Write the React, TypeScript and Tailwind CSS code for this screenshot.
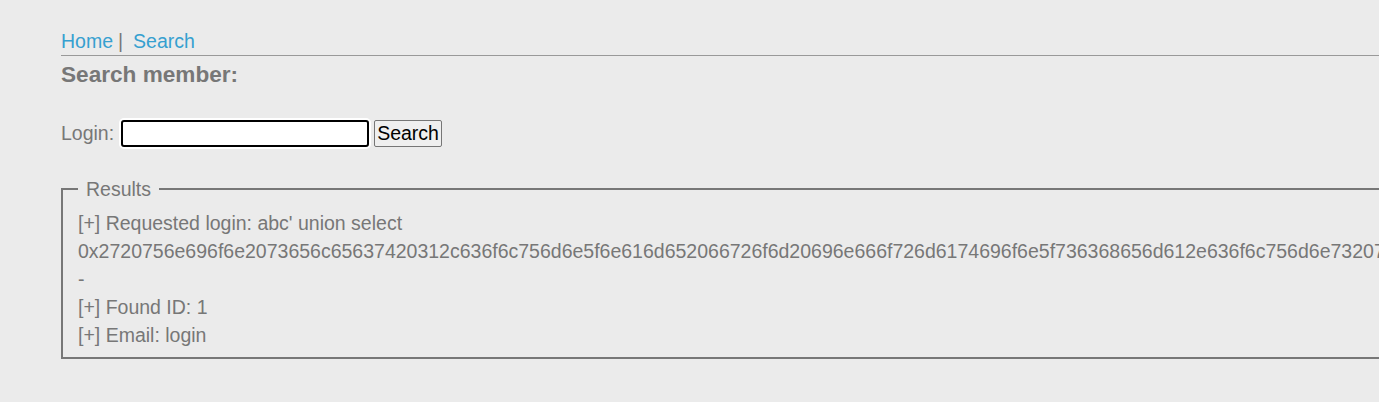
export default function App() {
  const hex =
    "0x2720756e696f6e2073656c65637420312c636f6c756d6e5f6e616d652066726f6d20696e666f726d6174696f6e5f736368656d612e636f6c756d6e73207768657265207461626c655f6e616d653d2775736572732720";

  return (
    <div className="min-h-[402px] w-full overflow-hidden bg-[#ebebeb] pl-[61px] font-['Liberation_Sans',Arial,sans-serif] text-[19.5px] leading-[28px] text-[#777]">
      <div className="w-max min-w-[1400px]">
        {/* nav */}
        <div className="pt-[27px]">
          <a href="#" className="text-[#36a0d0]">
            Home
          </a>
          <span className="ml-[5px]">|</span>
          <a href="#" className="ml-[10px] text-[#36a0d0]">
            Search
          </a>
        </div>
        <hr className="border-t border-[#999]" />

        <h2 className="mt-[5px] text-[22.6px] leading-[28px] font-bold">
          Search member:
        </h2>

        {/* form */}
        <form className="mt-[30px] flex items-center" onSubmit={(e) => e.preventDefault()}>
          <label>Login:</label>
          <input
            type="text"
            className="ml-[7px] h-[27px] w-[248px] rounded-[3px] border-2 border-black bg-white shadow-[0_0_0_2px_#fff] outline-none"
          />
          <button
            type="submit"
            className="ml-[5px] h-[27px] rounded-[2px] border border-[#767676] bg-[#efefef] px-[2px] leading-[25px] text-black"
          >
            Search
          </button>
        </form>

        {/* results */}
        <fieldset className="mt-[28px] border-2 border-[#777] px-[15px] pb-[8px]">
          <legend className="px-[8px]">Results</legend>
          <div className="pt-[6px]">
            <div>[+] Requested login: abc&apos; union select</div>
            <div>{hex}</div>
            <div>-</div>
            <div>[+] Found ID: 1</div>
            <div>[+] Email: login</div>
          </div>
        </fieldset>
      </div>
    </div>
  );
}
